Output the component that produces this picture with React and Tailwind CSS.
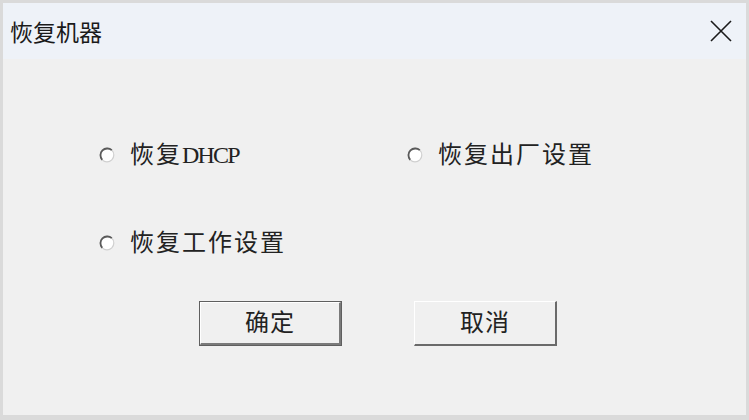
import React, { useState } from 'react';

const cjk = { fontFamily: '"Liberation Serif", "Noto Sans CJK SC", serif' };

function Radio({ checked }) {
  return (
    <svg width="16" height="16" viewBox="0 0 16 16" className="w-[16px] h-[16px] shrink-0">
      <circle cx="8" cy="8" r="6.8" fill="#ffffff" stroke="#d0d0d0" strokeWidth="1.2" />
      <path d="M 12.8 3.2 A 6.8 6.8 0 0 0 3.2 12.8" fill="none" stroke="#5a5a5a" strokeWidth="1.8" />
      {checked && <circle cx="8" cy="8" r="2.6" fill="#1a1a1a" />}
    </svg>
  );
}

function Option({ label, checked, onPick }) {
  return (
    <label className="flex items-center h-[30px] gap-[15px] cursor-default" onClick={onPick}>
      <Radio checked={checked} />
      <span className="text-[24px] leading-none tracking-[2px] text-[#222]" style={cjk}>
        {label}
      </span>
    </label>
  );
}

export default function App() {
  const [mode, setMode] = useState(null);

  return (
    <div className="w-[749px] h-[420px] flex flex-col bg-[#f0f0f0] border-[3px] border-b-[5px] border-[#dadada]">
      <div className="h-[56px] shrink-0 flex items-center justify-between pl-[7px] pr-[14px] bg-[#eef2f8]">
        <span
          className="text-[23px] leading-none text-[#1a1a1a]"
          style={{ fontFamily: '"Noto Sans CJK SC", "Noto Sans", sans-serif' }}
        >
          恢复机器
        </span>
        <svg width="22" height="22" viewBox="0 0 22 22">
          <path d="M1 1 L21 21 M21 1 L1 21" stroke="#1a1a1a" strokeWidth="1.6" />
        </svg>
      </div>

      <div className="flex-1 flex flex-col pt-[81px] pl-[96px]">
        <div className="grid grid-cols-[308px_1fr] gap-y-[58px]">
          <Option
            label={<>恢复<span className="text-[24px] tracking-[-1.8px]">DHCP</span></>}
            checked={mode === 'dhcp'}
            onPick={() => setMode('dhcp')}
          />
          <Option label="恢复出厂设置" checked={mode === 'factory'} onPick={() => setMode('factory')} />
          <Option label="恢复工作设置" checked={mode === 'work'} onPick={() => setMode('work')} />
        </div>

        <div className="flex gap-[72px] mt-[43px] pl-[100px]">
          <button className="w-[143px] h-[45px] border border-[#5f5f5f] bg-[#f0f0f0] p-0">
            <span
              className="flex items-center justify-center w-full h-full border-t border-l border-white border-b-2 border-r-2 border-b-[#7a7a7a] border-r-[#7a7a7a] text-[24px] tracking-[1px] text-[#222]"
              style={cjk}
            >
              确定
            </span>
          </button>
          <button
            className="w-[143px] h-[45px] flex items-center justify-center bg-[#f0f0f0] border-t border-l border-white border-b-2 border-r-2 border-b-[#6a6a6a] border-r-[#6a6a6a] text-[24px] tracking-[1px] text-[#222]"
            style={cjk}
          >
            取消
          </button>
        </div>
      </div>
    </div>
  );
}
